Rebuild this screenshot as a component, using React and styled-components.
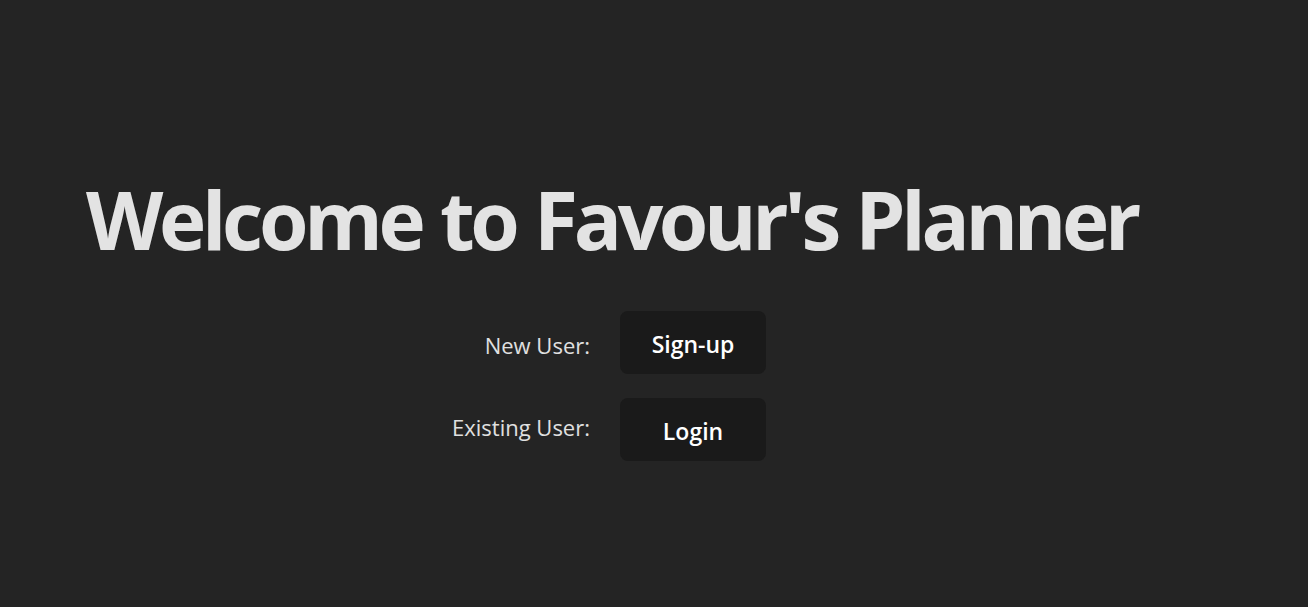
import styled, { createGlobalStyle } from "styled-components";

const GlobalStyle = createGlobalStyle`
  html, body {
    margin: 0;
    padding: 0;
    background: #242424;
  }
  body {
    font-family: "Open Sans", "Noto Sans", sans-serif;
    color: rgba(255, 255, 255, 0.87);
  }
`;

function App() {
  return (
    <>
      <GlobalStyle />
      <Page>
        <Title>Welcome to Favour's Planner</Title>
        <Form>
          <Label>New User:</Label>
          <Button type="button">Sign-up</Button>
          <Label $raise>Existing User:</Label>
          <Button type="button">Login</Button>
        </Form>
      </Page>
    </>
  );
}

const Page = styled.div`
  min-height: 607px;
  box-sizing: border-box;
  padding-top: 179px;
  display: flex;
  flex-direction: column;
`;

const Title = styled.h1`
  margin: 0 0 52px 86px;
  font-size: 80px;
  line-height: 1;
  font-weight: 700;
  color: #e3e3e3;
  letter-spacing: -4.3px;
  word-spacing: 2px;
  white-space: nowrap;
`;

const Form = styled.div`
  display: grid;
  grid-template-columns: 590px 146px;
  column-gap: 30px;
  row-gap: 24px;
  align-items: center;
`;

const Label = styled.span`
  text-align: right;
  font-size: 22px;
  color: #e0e0e0;
  margin-top: ${(p) => (p.$raise ? "0" : "4px")};
  margin-bottom: ${(p) => (p.$raise ? "6px" : "0")};
`;

const Button = styled.button`
  width: 146px;
  height: 63px;
  border: 1px solid transparent;
  border-radius: 8px;
  background: #1a1a1a;
  color: #ffffff;
  font-family: inherit;
  font-size: 23px;
  font-weight: 600;
  padding: 2px 0 0;
  cursor: pointer;
`;

export default App;
